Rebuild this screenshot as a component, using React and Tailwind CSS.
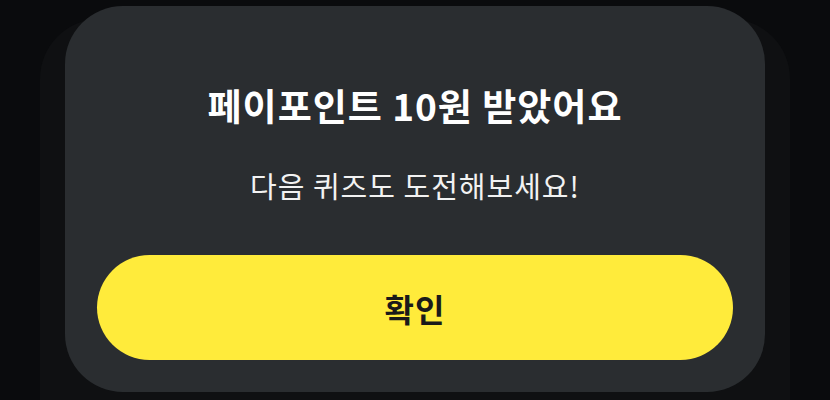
import React from 'react';

export default function App() {
  return (
    <div
      className="relative h-[400px] w-[830px] overflow-hidden bg-[#0a0b0d]"
      style={{ fontFamily: '"Noto Sans CJK KR", "Noto Sans", sans-serif' }}
    >
      {/* card peeking behind */}
      <div className="absolute left-[40px] right-[40px] top-[19px] bottom-0 rounded-t-[60px] bg-[#0f1012]" />

      {/* Dialog */}
      <div className="relative mx-[65px] mt-[6px] flex h-[386px] flex-col items-center rounded-[58px] bg-[#2a2d30] px-[32px] pt-[75px] pb-[32px]">
        <h2 className="text-[37px] font-bold leading-[48px] tracking-[1px] text-white">
          페이포인트 10원 받았어요
        </h2>
        <p className="mt-[36px] text-[29px] leading-[40px] tracking-[1px] text-[#f2f2f2]">
          다음 퀴즈도 도전해보세요!
        </p>
        <button className="mt-[50px] flex h-[105px] w-full items-center justify-center rounded-full bg-[#ffeb3b] text-[32px] font-bold tracking-[1px] text-[#1a1a1a]">
          확인
        </button>
      </div>
    </div>
  );
}
